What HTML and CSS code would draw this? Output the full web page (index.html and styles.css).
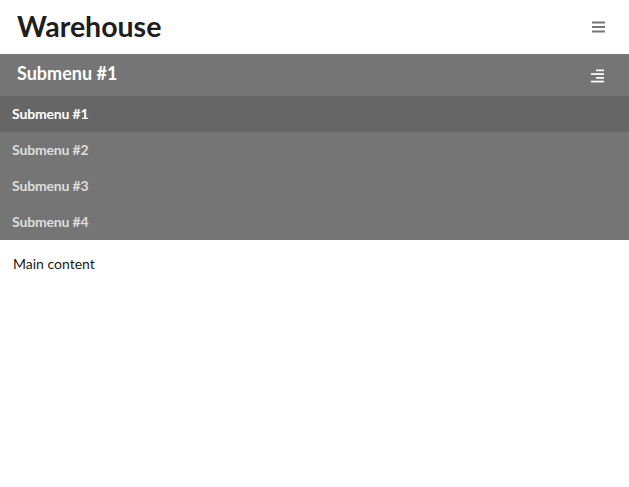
FILE: index.html
```html
<!DOCTYPE html>
<html>
<head>
<meta charset="utf-8">
<link rel="stylesheet" href="styles.css">
</head>
<body>
<header class="topbar">
  <h1 class="brand">Warehouse</h1>
  <button class="icon-btn bars" aria-label="menu">
    <svg width="14" height="12" viewBox="0 0 14 12"><rect x="0" y="0.5" width="13" height="2" fill="#777"/><rect x="0" y="5" width="13" height="2" fill="#777"/><rect x="0" y="9.5" width="13" height="2" fill="#777"/></svg>
  </button>
</header>
<nav class="submenu">
  <div class="submenu-head">
    <span class="submenu-title">Submenu #1</span>
    <svg class="align-icon" width="14" height="14" viewBox="0 0 14 14"><rect x="5" y="0.5" width="8" height="1.7" fill="#fff"/><rect x="0" y="4.2" width="13" height="1.7" fill="#fff"/><rect x="5" y="8" width="8" height="1.7" fill="#fff"/><rect x="0" y="11.7" width="13" height="1.7" fill="#fff"/></svg>
  </div>
  <ul class="submenu-list">
    <li class="item active">Submenu #1</li>
    <li class="item">Submenu #2</li>
    <li class="item">Submenu #3</li>
    <li class="item">Submenu #4</li>
  </ul>
</nav>
<main class="content">Main content</main>
</body>
</html>
```
FILE: styles.css
```css
* { box-sizing: border-box; }
html, body { margin: 0; padding: 0; background: #fff; }
body { font-family: Lato, "Open Sans", sans-serif; color: #222; }
.topbar {
  height: 54px;
  display: flex;
  align-items: center;
  justify-content: space-between;
  padding: 0 23px 2px 17px;
}
.brand {
  margin: 0;
  font-size: 28.5px;
  font-weight: 700;
  color: #1e1e1e;
  line-height: 1;
}
.icon-btn {
  border: 0; background: none; padding: 0; margin: 0;
  display: flex;
}
.bars { margin-top: 2px; }
.submenu { background: #757575; }
.submenu-head {
  height: 42px;
  display: flex;
  align-items: center;
  justify-content: space-between;
  padding: 0 24px 5px 17px;
}
.submenu-title {
  color: #fff;
  font-size: 18px;
  font-weight: 700;
}
.align-icon { margin-top: 6px; }
.submenu-list { list-style: none; margin: 0; padding: 0; }
.item {
  height: 36px;
  display: flex;
  align-items: center;
  padding: 0 12px 2px;
  font-size: 14px;
  font-weight: 700;
  letter-spacing: -0.15px;
  color: #ddd;
}
.item.active { background: #666; color: #fff; }
.content {
  padding: 15px 13px;
  font-size: 14px;
  color: #1a1a1a;
}
```
